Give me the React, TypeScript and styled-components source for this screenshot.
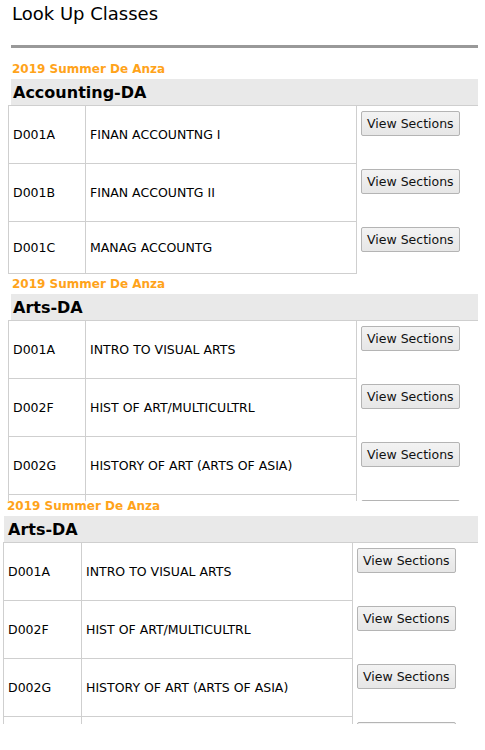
import React from 'react';
import styled, { createGlobalStyle } from 'styled-components';

interface ICourse {
  code: string
  title: string
}

interface IBlock {
  term: string
  subject: string
  courses: ICourse[]
  shift: number
  termH: number
  clip?: number
  lastRow?: number
}

const arts: ICourse[] = [
  { code: 'D001A', title: 'INTRO TO VISUAL ARTS' },
  { code: 'D002F', title: 'HIST OF ART/MULTICULTRL' },
  { code: 'D002G', title: 'HISTORY OF ART (ARTS OF ASIA)' },
  { code: 'D002H', title: 'HISTORY OF ART (RENAISSANCE)' },
];

const blocks: IBlock[] = [
  {
    term: '2019 Summer De Anza',
    subject: 'Accounting-DA',
    shift: 0,
    termH: 20,
    lastRow: 52,
    courses: [
      { code: 'D001A', title: 'FINAN ACCOUNTNG I' },
      { code: 'D001B', title: 'FINAN ACCOUNTG II' },
      { code: 'D001C', title: 'MANAG ACCOUNTG' },
    ],
  },
  { term: '2019 Summer De Anza', subject: 'Arts-DA', shift: 0, termH: 20, clip: 227, courses: arts },
  { term: '2019 Summer De Anza', subject: 'Arts-DA', shift: -5, termH: 15, clip: 223, courses: arts },
];

const App: React.FC = () => {
  return (
    <>
      <GlobalStyle/>
      <Page>
        <Title>Look Up Classes</Title>
        <Rule/>
        {blocks.map((block, i) => (
          <Block key={i} $clip={block.clip}>
            <Term $shift={block.shift} $h={block.termH}>{block.term}</Term>
            <Subject $shift={block.shift}>{block.subject}</Subject>
            <Courses $shift={block.shift}>
              <tbody>
                {block.courses.map((course, j) => (
                  <Row
                    key={course.code}
                    $h={j === block.courses.length - 1 && block.lastRow ? block.lastRow : 58}
                  >
                    <Code $wide={block.shift !== 0}>{course.code}</Code>
                    <Name>{course.title}</Name>
                    <Action>
                      <ViewButton type='button'>View Sections</ViewButton>
                    </Action>
                  </Row>
                ))}
              </tbody>
            </Courses>
          </Block>
        ))}
      </Page>
    </>
  );
};

export default App;

const GlobalStyle = createGlobalStyle`
  html, body {
    margin: 0;
    padding: 0;
    background: #fff;
  }

  body {
    font-family: "DejaVu Sans", Verdana, sans-serif;
    color: #000;
  }
`;

const Page = styled.main`
  width: 485px;
  height: 750px;
  overflow: hidden;
  display: flex;
  flex-direction: column;
`;

const Title = styled.h1`
  margin: 0;
  padding: 2px 12px 0;
  height: 43px;
  font-size: 18px;
  font-weight: 400;
  line-height: 24px;
`;

const Rule = styled.hr`
  margin: 0 7px 0 11px;
  height: 3px;
  border: 0;
  background: #999;
`;

const Block = styled.section<{ $clip?: number }>`
  display: flex;
  flex-direction: column;
  flex-shrink: 0;
  ${(p) => p.$clip && `height: ${p.$clip}px; overflow: hidden;`}

  &:first-of-type {
    margin-top: 11px;
  }
`;

const Term = styled.div<{ $shift: number; $h: number }>`
  display: flex;
  align-items: flex-end;
  margin-left: ${(p) => 12 + p.$shift}px;
  height: ${(p) => p.$h}px;
  padding-bottom: 3px;
  box-sizing: border-box;
  font-size: 12px;
  font-weight: 700;
  line-height: 14px;
  color: #ffa31a;
  flex-shrink: 0;
`;

const Subject = styled.h2<{ $shift: number }>`
  flex-shrink: 0;
  margin: 0 7px 0 ${(p) => 11 + p.$shift - (p.$shift ? 2 : 0)}px;
  padding: 0 0 0 ${(p) => (p.$shift ? 4 : 2)}px;
  height: 26px;
  font-size: 16px;
  font-weight: 700;
  line-height: 27px;
  background: #e9e9e9;
  border-bottom: 1px solid #cfcfcf;
`;

const Courses = styled.table<{ $shift: number }>`
  flex-shrink: 0;
  margin-left: ${(p) => 8 + p.$shift}px;
  margin-top: -1px;
  border-collapse: collapse;
  font-size: 12.5px;
`;

const Row = styled.tr<{ $h: number }>`
  height: ${(p) => p.$h}px;
`;

const Code = styled.td<{ $wide: boolean }>`
  width: ${(p) => (p.$wide ? 78 : 77)}px;
  padding: 0 0 0 4px;
  box-sizing: border-box;
  border: 1px solid #cfcfcf;
  vertical-align: middle;
`;

const Name = styled.td`
  width: 271px;
  padding: 0 0 0 4px;
  box-sizing: border-box;
  border: 1px solid #cfcfcf;
  vertical-align: middle;
`;

const Action = styled.td`
  padding: 5px 0 0 4px;
  vertical-align: top;
`;

const ViewButton = styled.button`
  height: 25px;
  padding: 0 5px;
  font-family: "DejaVu Sans", Verdana, sans-serif;
  font-size: 12.5px;
  color: #111;
  background: linear-gradient(#f3f3f3, #e6e6e6);
  border: 1px solid #b4b4b4;
  border-radius: 2px;
  white-space: nowrap;
`;
